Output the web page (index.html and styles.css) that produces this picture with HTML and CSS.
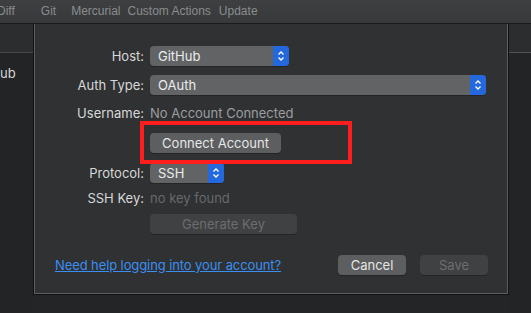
FILE: index.html
```html
<!DOCTYPE html>
<html>
<head>
<meta charset="utf-8">
<link rel="stylesheet" href="styles.css">
</head>
<body>
<div class="menubar">
  <span class="mi mi-diff">Diff</span>
  <span class="mi mi-git">Git</span>
  <span class="mi mi-hg">Mercurial</span>
  <span class="mi mi-ca">Custom Actions</span>
  <span class="mi">Update</span>
</div>
<div class="main">
  <aside class="pane pane-left">
    <div class="pane-head"></div>
    <div class="pane-item">ub</div>
  </aside>
  <div class="center">
    <section class="sheet">
      <div class="form">
        <div class="row r-host">
          <span class="lbl">Host:</span>
          <div class="select w-host"><span class="val">GitHub</span><span class="arrows"><svg width="8" height="12" viewBox="0 0 8 12"><polyline points="1.5,4.5 4,2 6.5,4.5" /><polyline points="1.5,7.5 4,10 6.5,7.5" /></svg></span></div>
        </div>
        <div class="row r-auth">
          <span class="lbl">Auth Type:</span>
          <div class="select w-auth"><span class="val">OAuth</span><span class="arrows"><svg width="8" height="12" viewBox="0 0 8 12"><polyline points="1.5,4.5 4,2 6.5,4.5" /><polyline points="1.5,7.5 4,10 6.5,7.5" /></svg></span></div>
        </div>
        <div class="row r-user">
          <span class="lbl">Username:</span>
          <span class="info">No Account Connected</span>
        </div>
        <div class="row r-connect">
          <span class="lbl"></span>
          <div class="mark"><button class="btn w-connect">Connect Account</button></div>
        </div>
        <div class="row r-proto">
          <span class="lbl">Protocol:</span>
          <div class="select w-proto"><span class="val">SSH</span><span class="arrows"><svg width="8" height="12" viewBox="0 0 8 12"><polyline points="1.5,4.5 4,2 6.5,4.5" /><polyline points="1.5,7.5 4,10 6.5,7.5" /></svg></span></div>
        </div>
        <div class="row r-ssh">
          <span class="lbl">SSH Key:</span>
          <span class="info dim">no key found</span>
        </div>
        <div class="row r-gen">
          <span class="lbl"></span>
          <button class="btn btn-disabled w-gen">Generate Key</button>
        </div>
      </div>
      <div class="footer">
        <a class="help" href="#">Need help logging into your account?</a>
        <div class="actions">
          <button class="btn w-action">Cancel</button>
          <button class="btn btn-disabled w-action">Save</button>
        </div>
      </div>
    </section>
  </div>
  <aside class="pane pane-right">
    <div class="pane-head"></div>
  </aside>
</div>
</body>
</html>
```

FILE: styles.css
```css
* { box-sizing: border-box; }
html, body { margin: 0; padding: 0; }
body {
  width: 531px;
  height: 313px;
  overflow: hidden;
  background: #232527;
  font-family: "Inter", "Liberation Sans", sans-serif;
  font-size: 13px;
  color: #dcdcdc;
}
.menubar {
  height: 24px;
  background: linear-gradient(#3d3f41, #37393b);
  border-bottom: 1px solid #1a1b1c;
  display: flex;
  align-items: center;
  font-family: "Liberation Sans", sans-serif;
  font-size: 12px;
  color: #8a8c8e;
  padding-bottom: 1px;
  overflow: hidden;
}
.mi { margin-right: 8px; white-space: nowrap; flex: none; }
.mi-diff { margin-left: -3px; margin-right: 26px; }
.mi-git { margin-right: 15px; }
.mi-hg { margin-right: 7px; }
.mi-ca { margin-right: 8px; }
.main {
  display: flex;
  height: 289px;
}
.pane {
  background: #222426;
  display: flex;
  flex-direction: column;
  overflow: hidden;
}
.pane-left { width: 33px; }
.pane-right { flex: 1; }
.pane-head {
  height: 29px;
  background: #2b2d2f;
  border-bottom: 1px solid #46484a;
}
.pane-right .pane-head { border-bottom-color: #505254; }
.pane-item {
  margin-top: 12px;
  color: #d6d6d6;
  font-size: 13px;
}
.center {
  width: 476px;
  background: #232527;
}
.sheet {
  height: 271px;
  background: #2f3133;
  border: 1px solid #111213;
  border-top: none;
  box-shadow: inset 1px 0 #5c5e60, inset -1px 0 #5c5e60, inset 0 -1px #5c5e60;
  display: flex;
  flex-direction: column;
}
.form {
  padding-top: 22px;
  display: flex;
  flex-direction: column;
}
.row {
  display: flex;
  align-items: center;
  height: 20px;
}
.r-auth { margin-top: 9px; }
.r-user { margin-top: 8px; }
.r-connect { margin-top: 10px; }
.r-proto { margin-top: 10px; }
.r-ssh { margin-top: 5px; }
.r-gen { margin-top: 6px; }
.lbl {
  width: 110px;
  flex: none;
  text-align: right;
  margin-right: 6px;
  color: #d8d8d8;
}
.select {
  height: 20px;
  border-radius: 4px;
  background: #616365;
  display: flex;
  align-items: center;
  justify-content: space-between;
  overflow: hidden;
  box-shadow: 0 1px 0 rgba(0,0,0,0.25);
}
.val { padding-left: 8px; color: #ececec; }
.arrows {
  width: 16px;
  height: 20px;
  background: #2468de;
  display: flex;
  align-items: center;
  justify-content: center;
}
.arrows svg polyline {
  fill: none;
  stroke: #ffffff;
  stroke-width: 1.3;
}
.w-host { width: 139px; }
.w-auth { width: 336px; }
.w-proto { width: 74px; }
.info { color: #9c9ea0; }
.info.dim { color: #67696b; }
.btn {
  display: block;
  font-family: inherit;
  font-size: 13px;
  height: 20px;
  border: none;
  border-radius: 4px;
  background: #5c5e60;
  color: #e6e6e6;
  padding: 0;
  box-shadow: 0 1px 0 rgba(0,0,0,0.25);
}
.btn-disabled {
  background: #3f4143;
  color: #6b6d6f;
}
.w-connect { width: 131px; }
.w-gen { width: 147px; }
.mark { position: relative; height: 20px; }
.mark::after {
  content: "";
  position: absolute;
  left: -10px;
  top: -12px;
  width: 204px;
  height: 35px;
  border: 4px solid #ff1d1d;
}
.footer {
  margin-top: 21px;
  display: flex;
  align-items: center;
  justify-content: space-between;
  padding: 0 20px 0 21px;
  height: 20px;
}
.help {
  color: #3b8ef2;
  text-decoration: underline;
  letter-spacing: -0.1px;
}
.actions { display: flex; gap: 14px; }
.w-action { width: 68px; }
```
